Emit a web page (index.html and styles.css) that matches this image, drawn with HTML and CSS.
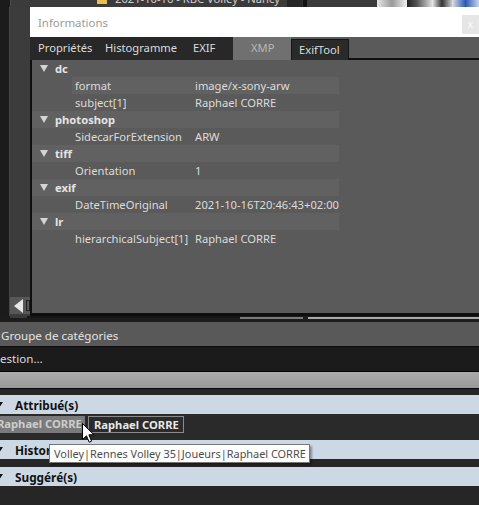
FILE: index.html
```html
<!DOCTYPE html>
<html>
<head>
<meta charset="utf-8">
<link rel="stylesheet" href="styles.css">
</head>
<body>
<div class="page">
  <div class="topstrip">
    <div class="ts-dark"></div>
    <div class="ts-line"></div>
    <div class="ts-gray">
      <svg class="ts-folder" width="10" height="8" viewBox="0 0 10 8"><rect x="0" y="0" width="10" height="4" fill="#e8c050"/></svg>
      <span class="ts-text">2021-10-16 - RBC Volley - Nancy</span>
    </div>
    <div class="ts-dark2"></div>
    <div class="ts-black"></div>
    <div class="ts-gray2"></div>
    <div class="ts-photo"><span class="p1"></span><span class="p2"></span><span class="p3"></span><span class="p4"></span></div>
  </div>

  <div class="main">
    <div class="gutter">
      <div class="g-dark"></div>
      <div class="g-line"></div>
      <div class="g-gray">
        <div class="g-scroll"><span class="g-arrow"></span><span class="g-box"></span></div>
      </div>
    </div>
    <div class="window">
      <div class="titlebar">
        <span class="title">Informations</span>
        <span class="close">x</span>
      </div>
      <div class="tabs">
        <div class="tabgroup">
          <span class="tab">Propriétés</span>
          <span class="tab">Histogramme</span>
          <span class="tab">EXIF</span>
        </div>
        <span class="tab xmp">XMP</span>
        <span class="tab exiftool">ExifTool</span>
        <div class="tabfill"></div>
      </div>
      <div class="content">
        <div class="tree">
          <div class="row group"><span class="tri"></span><span class="gname">dc</span></div>
          <div class="row child alt"><span class="key">format</span><span class="val">image/x-sony-arw</span></div>
          <div class="row child"><span class="key">subject[1]</span><span class="val">Raphael CORRE</span></div>
          <div class="row group alt"><span class="tri"></span><span class="gname">photoshop</span></div>
          <div class="row child"><span class="key">SidecarForExtension</span><span class="val">ARW</span></div>
          <div class="row group alt"><span class="tri"></span><span class="gname">tiff</span></div>
          <div class="row child"><span class="key">Orientation</span><span class="val">1</span></div>
          <div class="row group alt"><span class="tri"></span><span class="gname">exif</span></div>
          <div class="row child"><span class="key">DateTimeOriginal</span><span class="val">2021-10-16T20:46:43+02:00</span></div>
          <div class="row group alt"><span class="tri"></span><span class="gname">lr</span></div>
          <div class="row child"><span class="key">hierarchicalSubject[1]</span><span class="val">Raphael CORRE</span></div>
        </div>
      </div>
    </div>
  </div>

  <div class="sepstrip">
    <span class="s1"></span><span class="s2"></span><span class="s3"></span><span class="s4"></span><span class="s5"></span>
  </div>

  <div class="panel">
    <div class="grphead">Groupe de catégories</div>
    <div class="sugg">estion…</div>
    <div class="graybar"></div>
    <div class="gap6"></div>
    <div class="sect"><span class="stri"></span><span class="sname">Attribué(s)</span></div>
    <div class="chips">
      <span class="chip chip-sel">Raphael CORRE</span>
      <span class="chip chip-out">Raphael CORRE</span>
    </div>
    <div class="sect"><span class="stri"></span><span class="sname">Historique</span></div>
    <div class="gap8"></div>
    <div class="sect"><span class="stri"></span><span class="sname">Suggéré(s)</span></div>
    <div class="rest"></div>
  </div>

  <div class="tooltip">Volley|Rennes Volley 35|Joueurs|Raphael CORRE</div>
  <svg class="cursor" width="13" height="20" viewBox="0 0 13 20">
    <path d="M0.5 0.5 L0.5 16.5 L4.5 12.8 L7.2 19.2 L9.6 18.2 L6.9 11.8 L12 11.8 Z" fill="#ffffff" stroke="#000000" stroke-width="1" stroke-linejoin="miter"/>
  </svg>
</div>
</body>
</html>
```

FILE: styles.css
```css
* { box-sizing: border-box; }
html, body { margin: 0; padding: 0; }
body {
  width: 479px;
  height: 505px;
  overflow: hidden;
  background: #262626;
  font-family: "Noto Sans", "Open Sans", sans-serif;
  font-size: 11.2px;
}
.page { position: relative; width: 479px; height: 505px; overflow: hidden; }

/* top strip */
.topstrip { display: flex; height: 7px; overflow: hidden; }
.ts-dark { width: 10px; background: #1b1b1b; }
.ts-line { width: 1px; background: #4a4a4a; }
.ts-gray { width: 276px; background: #3b3b3b; display: flex; align-items: flex-start; padding-left: 86px; gap: 8px; overflow: hidden; }
.ts-folder { margin-top: 0; flex: none; }
.ts-text { color: #cfcfcf; font-size: 11.2px; line-height: 12px; margin-top: -7px; white-space: nowrap; }
.ts-dark2 { width: 15px; background: #262626; }
.ts-black { width: 5px; background: #111; border-left: 1px solid #333; }
.ts-gray2 { width: 70px; background: #3a3a3a; }
.ts-photo { flex: 1; display: flex; background: #d8d8d8; }
.ts-photo span { display: block; height: 7px; }
.p1 { width: 30px; background: linear-gradient(90deg, #e6e6e6, #9a9a9a, #f0f0f0); }
.p2 { width: 25px; background: linear-gradient(90deg, #222, #555 40%, #ddd); }
.p3 { width: 20px; background: linear-gradient(90deg, #eee, #333, #ccc); }
.p4 { flex: 1; background: linear-gradient(90deg, #e0e0e0, #2a5ab8 50%, #c8d4f0); }

/* main */
.main { display: flex; height: 309px; }
.gutter { width: 30px; display: flex; }
.g-dark { width: 10px; background: #1b1b1b; }
.g-line { width: 1px; background: #474747; }
.g-gray { flex: 1; background: #3c3c3c; display: flex; flex-direction: column; justify-content: flex-end; }
.g-scroll { height: 17px; margin-bottom: 2px; background: #575757; display: flex; align-items: center; padding-left: 4px; }
.g-arrow { width: 0; height: 0; border-top: 7px solid transparent; border-bottom: 7px solid transparent; border-right: 9px solid #e8e8e8; }
.g-box { width: 4px; height: 11px; margin-left: 3px; border: 1px solid #222; }

.window { flex: 1; display: flex; flex-direction: column; }
.titlebar { height: 30px; background: #ffffff; display: flex; align-items: center; padding-left: 8px; position: relative; }
.title { color: #9a9a9a; font-size: 11.4px; }
.close { position: absolute; right: 0; top: 8px; width: 17px; height: 19px; background: #e6e6e6; color: #fbfbfb; font-size: 11px; line-height: 18px; text-align: center; }

.tabs { height: 23px; display: flex; background: #5a5a5a; }
.tabgroup { display: flex; background: #282828; width: 203px; padding-left: 8px; gap: 0; }
.tab { color: #dcdcdc; font-size: 11.2px; line-height: 22px; white-space: nowrap; }
.tabgroup .tab:nth-child(1) { width: 67px; }
.tabgroup .tab:nth-child(2) { width: 88px; }
.xmp { width: 58px; background: #707070; color: #b8b8b8; padding-left: 18px; }
.exiftool { width: 58px; background: #2a2a2a; border: 1px solid #151515; border-bottom: none; margin-top: 2px; line-height: 19px; padding-left: 7px; }
.tabfill { flex: 1; border-bottom: 2px solid #111; }

.content { flex: 1; background: #5a5a5a; border-left: 2px solid #0e0e0e; border-bottom: 3px solid #0e0e0e; }
.tree { width: 307px; }
.row { height: 17px; display: flex; align-items: center; color: #dcdcdc; white-space: nowrap; }
.group { padding-left: 8px; }
.group.alt { background: #616161; }
.tri { width: 0; height: 0; border-left: 4px solid transparent; border-right: 4px solid transparent; border-top: 7px solid #d4d4d4; margin-right: 7px; }
.gname { font-weight: bold; color: #e4e4e4; }
.child { margin-left: 40px; padding-left: 3px; }
.child.alt { background: #616161; }
.key { width: 120px; flex: none; }
.val { flex: none; }

/* separator strip */
.sepstrip { display: flex; height: 6px; background: #1c1c1c; }
.sepstrip span { display: block; height: 2px; }
.s1 { width: 10px; background: #1b1b1b; }
.s2 { width: 17px; background: #3a3a3a; }
.s3 { width: 213px; background: #161616; }
.s4 { width: 63px; background: #7a7a7a; margin-top: 1px; }
.s5 { flex: 1; background: #a8a8a8; margin-left: 5px; margin-top: 1px; }

/* lower panel */
.panel { display: flex; flex-direction: column; }
.grphead { height: 25px; background: #595959; border-bottom: 1px solid #0d0d0d; color: #e4e4e4; padding-left: 1px; padding-top: 3px; line-height: 21px; font-size: 11.6px; }
.sugg { height: 25px; background: #1b1b1b; border-bottom: 1px solid #050505; color: #dcdcdc; line-height: 23px; font-size: 11.6px; }
.graybar { height: 17px; background: linear-gradient(#ababab, #999999); border-bottom: 1px solid #0b0b0b; }
.gap6 { height: 6px; background: #262626; }
.gap8 { height: 8px; background: #262626; }
.sect { height: 19px; background: #ccd9e5; display: flex; align-items: center; }
.stri { width: 0; height: 0; border-left: 4px solid transparent; border-right: 4px solid transparent; border-top: 6px solid #111; margin-left: -5px; margin-right: 12px; }
.sname { font-weight: bold; color: #111; font-size: 11.8px; }
.chips { height: 26px; background: #2a2a2a; display: flex; align-items: flex-start; padding-top: 2px; gap: 3px; }
.chip { height: 17px; font-weight: bold; white-space: nowrap; line-height: 16px; }
.chip-sel { background: #7a7a7a; color: #cdcdcd; width: 85px; padding-left: 0; text-indent: -3px; overflow: hidden; }
.chip-out { background: #2b2b2b; color: #e8e8e8; border: 1px solid #8a8a8a; width: 96px; padding-left: 5px; line-height: 15px; }
.rest { height: 19px; background: #262626; }

.tooltip { position: absolute; left: 49px; top: 444px; width: 261px; height: 19px; background: #ffffff; border: 1px solid #767676; color: #4c4c4c; font-size: 10.9px; line-height: 17px; padding-left: 4px; white-space: nowrap; overflow: hidden; box-shadow: 2px 2px 2px rgba(0,0,0,0.35); }
.cursor { position: absolute; left: 82px; top: 423px; }
```
